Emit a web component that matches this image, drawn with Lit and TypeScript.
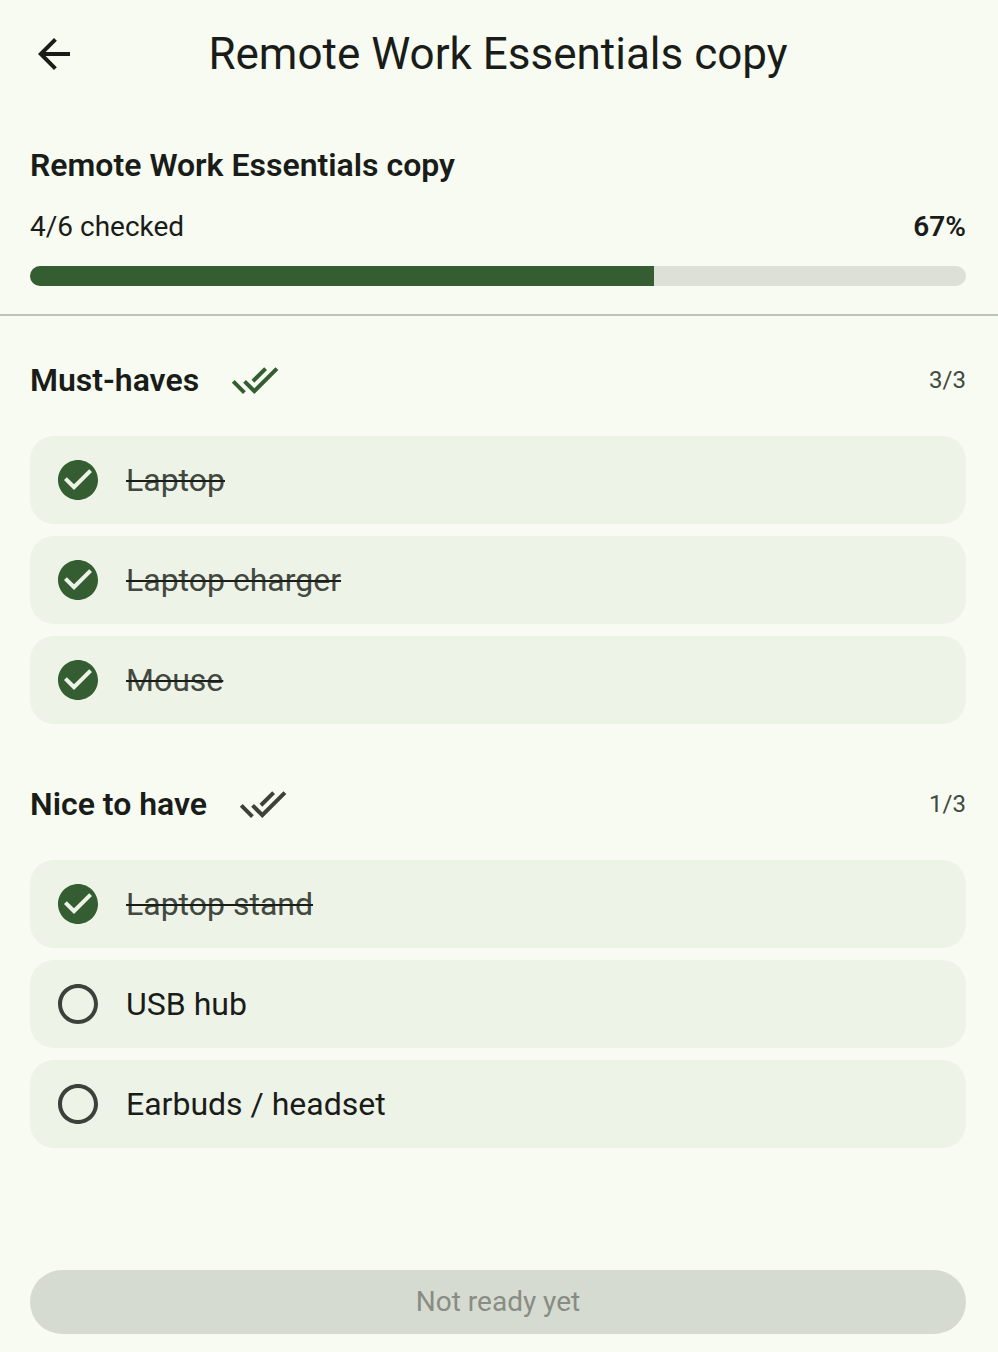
import { LitElement, html, css, svg } from "lit";
import { customElement, property, state } from "lit/decorators.js";
import { classMap } from "lit/directives/class-map.js";

interface Item {
  name: string;
  checked: boolean;
}

interface Group {
  title: string;
  items: Item[];
}

const arrowBack = svg`<path d="M20 11H7.83l5.59-5.59L12 4l-8 8 8 8 1.41-1.41L7.83 13H20v-2z" />`;
const doneAll = svg`<path d="M18 7l-1.41-1.41-6.34 6.34 1.41 1.41L18 7zm4.24-1.41L11.66 16.17 7.48 12l-1.41 1.41L11.66 19l12-12-1.42-1.41zM.41 13.41L6 19l1.41-1.41L1.83 12 .41 13.41z" />`;
const circleChecked = svg`<path d="M12 2C6.48 2 2 6.48 2 12s4.48 10 10 10 10-4.48 10-10S17.52 2 12 2zm-2 15l-5-5 1.41-1.41L10 14.17l7.59-7.59L19 8l-9 9z" />`;
const circleEmpty = svg`<path d="M12 2C6.48 2 2 6.48 2 12s4.48 10 10 10 10-4.48 10-10S17.52 2 12 2zm0 18c-4.42 0-8-3.58-8-8s3.58-8 8-8 8 3.58 8 8-3.58 8-8 8z" />`;

const icon = (shape: unknown) =>
  html`<svg class="icon" viewBox="0 0 24 24" aria-hidden="true">${shape}</svg>`;

const iconStyles = css`
  .icon {
    display: block;
    width: 48px;
    height: 48px;
    flex: none;
    fill: currentColor;
  }
`;

@customElement("check-item")
class CheckItem extends LitElement {
  static styles = [
    iconStyles,
    css`
      :host {
        display: block;
      }
      .row {
        display: flex;
        align-items: center;
        gap: 24px;
        min-height: 88px;
        padding: 0 24px;
        box-sizing: border-box;
        border-radius: 24px;
        background: #eef3e8;
        color: #1a1c19;
        font-size: 32px;
        line-height: 48px;
        cursor: pointer;
      }
      .box {
        display: grid;
        color: #3c423a;
      }
      .box > * {
        grid-area: 1 / 1;
      }
      .input {
        appearance: none;
        width: 48px;
        height: 48px;
        margin: 0;
        border-radius: 50%;
        cursor: pointer;
      }
      .done .box {
        color: #345e32;
      }
      .done .name {
        color: #424940;
        text-decoration: line-through 2px #1a1c19;
      }
    `,
  ];

  @property({ attribute: false }) item!: Item;

  private toggle() {
    this.dispatchEvent(new CustomEvent("toggle-item"));
  }

  render() {
    const { name, checked } = this.item;
    return html`
      <label class=${classMap({ row: true, done: checked })}>
        <span class="box">
          <input class="input" type="checkbox" .checked=${checked} @change=${this.toggle} />
          ${icon(checked ? circleChecked : circleEmpty)}
        </span>
        <span class="name">${name}</span>
      </label>
    `;
  }
}

@customElement("app-root")
class AppRoot extends LitElement {
  static styles = [
    iconStyles,
    css`
      :host {
        display: flex;
        flex-direction: column;
        min-height: 100vh;
        box-sizing: border-box;
        background: #f7fbf1;
        color: #1a1c19;
        font-family: Roboto, "Noto Sans", sans-serif;
      }
      h1,
      h2,
      h3,
      ul {
        margin: 0;
        padding: 0;
      }
      .bar {
        display: grid;
        grid-template-columns: 48px 1fr 48px;
        align-items: center;
        min-height: 108px;
        padding: 0 32px 0 30px;
      }
      .plain {
        border: 0;
        padding: 0;
        background: none;
        color: inherit;
        cursor: pointer;
      }
      .title {
        font-size: 44px;
        line-height: 56px;
        font-weight: 400;
        text-align: center;
      }
      .summary {
        padding: 33px 32px 28px 30px;
        border-bottom: 2px solid #b9c3b7;
      }
      .heading {
        font-size: 32px;
        line-height: 48px;
        font-weight: 600;
      }
      .status {
        display: flex;
        justify-content: space-between;
        padding: 18px 0 19px;
        font-size: 28px;
        line-height: 40px;
      }
      .percent {
        font-weight: 600;
      }
      .track {
        height: 20px;
        border-radius: 10px;
        overflow: hidden;
        background: #dde0d7;
      }
      .fill {
        height: 100%;
        background: #345e32;
      }
      .lists {
        flex: 1;
        padding: 16px 32px 32px 30px;
      }
      .group + .group {
        margin-top: 32px;
      }
      .group-head {
        display: flex;
        align-items: center;
        min-height: 96px;
        gap: 32px;
      }
      .mark {
        color: #3c423a;
      }
      .complete {
        color: #345e32;
      }
      .count {
        margin-left: auto;
        color: #424940;
        font-size: 24px;
        line-height: 32px;
      }
      .items {
        display: grid;
        gap: 12px;
        padding-top: 8px;
        list-style: none;
      }
      .footer {
        padding: 0 32px 18px 30px;
      }
      .ready {
        display: block;
        width: 100%;
        min-height: 64px;
        border: 0;
        border-radius: 32px;
        background: #345e32;
        color: #ffffff;
        font-family: inherit;
        font-size: 28px;
        line-height: 40px;
      }
      .ready:disabled {
        background: #d6dbd1;
        color: #888c84;
      }
    `,
  ];

  @state() private name = "Remote Work Essentials copy";

  @state() private groups: Group[] = [
    {
      title: "Must-haves",
      items: [
        { name: "Laptop", checked: true },
        { name: "Laptop charger", checked: true },
        { name: "Mouse", checked: true },
      ],
    },
    {
      title: "Nice to have",
      items: [
        { name: "Laptop stand", checked: true },
        { name: "USB hub", checked: false },
        { name: "Earbuds / headset", checked: false },
      ],
    },
  ];

  private toggleItem(item: Item) {
    this.groups = this.groups.map((g) => ({
      ...g,
      items: g.items.map((i) => (i === item ? { ...i, checked: !i.checked } : i)),
    }));
  }

  private toggleGroup(group: Group) {
    const all = group.items.every((i) => i.checked);
    this.groups = this.groups.map((g) =>
      g === group ? { ...g, items: g.items.map((i) => ({ ...i, checked: !all })) } : g
    );
  }

  private renderGroup(group: Group) {
    const done = group.items.filter((i) => i.checked).length;
    const total = group.items.length;
    return html`
      <section class="group">
        <div class="group-head">
          <h3 class="heading">${group.title}</h3>
          <button
            class=${classMap({ plain: true, mark: true, complete: done === total })}
            aria-label="Check all"
            @click=${() => this.toggleGroup(group)}
          >
            ${icon(doneAll)}
          </button>
          <span class="count">${done}/${total}</span>
        </div>
        <ul class="items">
          ${group.items.map(
            (item) => html`<li>
              <check-item .item=${item} @toggle-item=${() => this.toggleItem(item)}></check-item>
            </li>`
          )}
        </ul>
      </section>
    `;
  }

  render() {
    const items = this.groups.flatMap((g) => g.items);
    const done = items.filter((i) => i.checked).length;
    const percent = (done / items.length) * 100;
    return html`
      <header class="bar">
        <button class="plain" aria-label="Back">${icon(arrowBack)}</button>
        <h1 class="title">${this.name}</h1>
      </header>
      <section class="summary">
        <h2 class="heading">${this.name}</h2>
        <div class="status">
          <span>${done}/${items.length} checked</span>
          <span class="percent">${Math.round(percent)}%</span>
        </div>
        <div class="track" role="progressbar" aria-label="Checked" aria-valuenow=${Math.round(percent)}>
          <div class="fill" style="width: ${percent}%"></div>
        </div>
      </section>
      <main class="lists">${this.groups.map((g) => this.renderGroup(g))}</main>
      <footer class="footer">
        <button class="ready" ?disabled=${done < items.length}>
          ${done < items.length ? "Not ready yet" : "Ready"}
        </button>
      </footer>
    `;
  }
}
